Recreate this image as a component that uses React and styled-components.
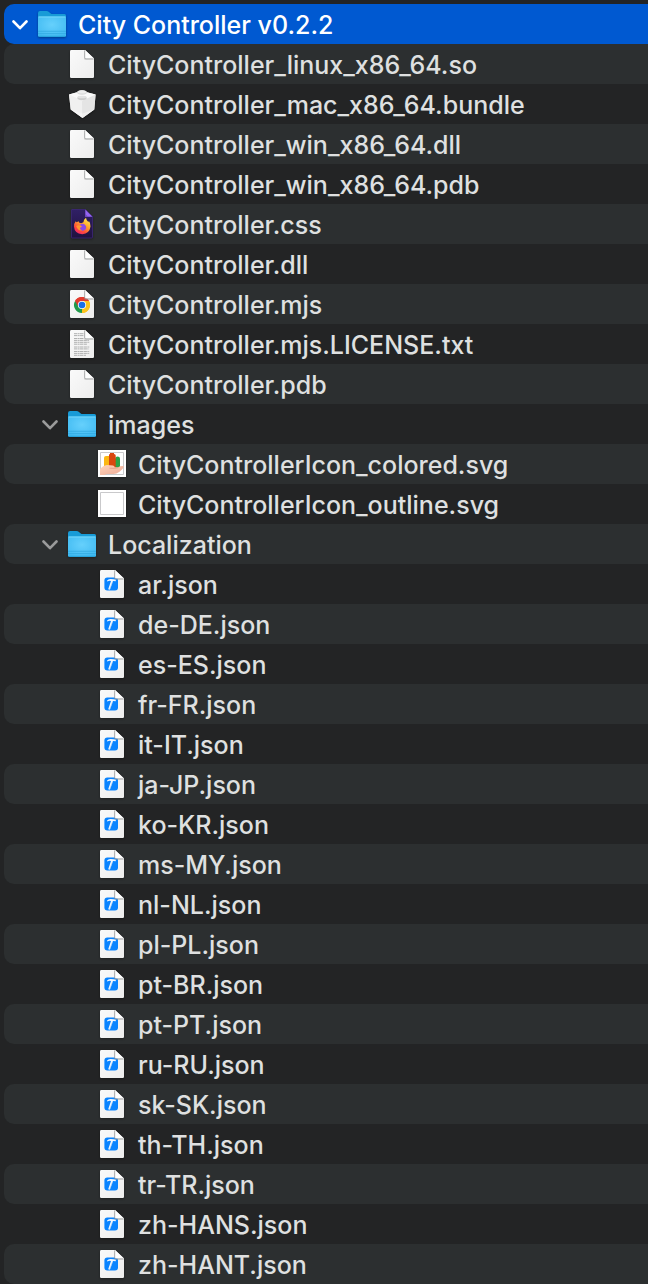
import React, { useState } from 'react';
import styled, { createGlobalStyle } from 'styled-components';

const GlobalStyle = createGlobalStyle`
  * { box-sizing: border-box; }
  html { background: #232425; }
  body { margin: 0; background: #232425; overflow-x: hidden; }
`;

const Tree = styled.ul`
  margin: 0;
  padding: 4px 0 0 4px;
  list-style: none;
  font-family: Inter, "Liberation Sans", sans-serif;
  font-size: 25px;
  font-weight: 500;
  line-height: 40px;
`;

const Row = styled.li`
  display: flex;
  align-items: center;
  height: 40px;
  padding-left: ${(p) => 8 + p.$level * 30}px;
  border-radius: 10px 0 0 10px;
  color: ${(p) => (p.$selected ? '#ffffff' : '#dfe0e0')};
  background: ${(p) => (p.$selected ? '#0059d1' : p.$striped ? '#2c2f30' : 'transparent')};
`;

const Disclosure = styled.button`
  display: flex;
  align-items: center;
  justify-content: center;
  width: 16px;
  height: 28px;
  padding: 2px 0 0;
  border: 0;
  background: none;
  color: ${(p) => (p.$selected ? '#ffffff' : '#9a9b9b')};

  svg { transform: ${(p) => (p.$open ? 'none' : 'rotate(-90deg)')}; }
`;

const Spacer = styled.span`
  width: 16px;
`;

const IconBox = styled.span`
  display: flex;
  flex: none;
  margin: 0 12px 0 10px;

  svg {
    display: block;
    overflow: visible;
    filter: drop-shadow(0 1px 1px rgba(0, 0, 0, 0.35));
  }
`;

const Name = styled.span`
  padding-top: 2px;
  white-space: nowrap;
`;

const Svg = ({ children }) => (
  <svg width="28" height="28" viewBox="0 0 28 28" aria-hidden="true">{children}</svg>
);

const Chevron = () => (
  <svg width="16" height="10" viewBox="0 0 16 10" fill="none" stroke="currentColor" strokeWidth="2.6" strokeLinecap="round" strokeLinejoin="round" aria-hidden="true">
    <path d="M1.5 1.5 8 8.2l6.5-6.7" />
  </svg>
);

const Defs = () => (
  <svg width="0" height="0" style={{ position: 'absolute' }} aria-hidden="true">
    <defs>
      <linearGradient id="paper" x1="0" y1="0" x2="1" y2="1">
        <stop offset="0" stopColor="#fafafa" /><stop offset="1" stopColor="#ededed" />
      </linearGradient>
      <radialGradient id="folderFront" cx=".5" cy=".4" r=".65">
        <stop offset="0" stopColor="#66d0fc" /><stop offset="1" stopColor="#42bbf2" />
      </radialGradient>
      <linearGradient id="night" x1="0" y1="0" x2="0" y2="1">
        <stop offset="0" stopColor="#302066" /><stop offset="1" stopColor="#20123f" />
      </linearGradient>
      <linearGradient id="flame" x1=".85" y1="0" x2=".2" y2="1">
        <stop offset="0" stopColor="#fff04f" /><stop offset=".4" stopColor="#ffa62b" />
        <stop offset=".72" stopColor="#ff4b3a" /><stop offset="1" stopColor="#ef2173" />
      </linearGradient>
      <linearGradient id="hand" x1="0" y1="0" x2="1" y2="1">
        <stop offset="0" stopColor="#ffd4bb" /><stop offset="1" stopColor="#eda994" />
      </linearGradient>
    </defs>
  </svg>
);

const Paper = ({ children }) => (
  <Svg>
    <path d="M3.2 0H17L26 8.6V26.8Q26 28 24.8 28H3.2Q2 28 2 26.8V1.2Q2 0 3.2 0Z" fill="url(#paper)" />
    {children}
    <path d="M16 .5V9Q16 9.8 17 9.8H25.8V8.4L17 0Z" fill="#8d8e8e" opacity=".3" />
    <path d="M17 0 26 8.6H18Q17 8.6 17 7.6Z" fill="#fff" />
    <path d="M16.7 .6V7.8Q16.8 8.9 18 8.9H25.4" fill="none" stroke="#9b9c9c" strokeWidth=".7" />
  </Svg>
);

const FolderIcon = () => (
  <Svg>
    <path d="M0 3Q0 1 2 1H8.5Q10 1 11 2T13.5 4H26.5Q28 4 28 5.5V12H0Z" fill="#189bd7" />
    <path d="M0 7.5Q0 6.5 1 6.5H27Q28 6.5 28 7.5V25.2Q28 27 26.2 27H1.8Q0 27 0 25.2Z" fill="url(#folderFront)" />
    <path d="M0.5 7H27.5" stroke="#77d7fa" strokeWidth="1" />
    <path d="M0 21.3H28M0 23.6H28" stroke="#2fa8df" strokeWidth=".7" />
    <path d="M0.5 26.3H27.5" stroke="#229fd8" strokeWidth="1" />
  </Svg>
);

const BundleIcon = () => (
  <Svg>
    <path d="M1 4.5 9 2.2 10 1Q14-.8 18 1L19 2.2 27.6 4.5 26.3 19.5 14.5 28 2.7 19.5Z" fill="#e5e5e5" />
    <path d="M1 4.5 14.2 10.5 14.5 28 2.7 19.5Z" fill="#f0f0f0" />
    <path d="M27.6 4.5 14.2 10.5 14.5 28 26.3 19.5Z" fill="#e4e4e4" />
    <path d="M1 4.5 9 2.3H19L27.6 4.5 14.2 10.7Z" fill="#fafafa" />
    <ellipse cx="14" cy="2.6" rx="4.8" ry="2.1" fill="#d7d7d7" />
    <ellipse cx="14" cy="1.9" rx="4.3" ry="1.5" fill="#ededed" />
    <path d="M9.5 7Q14 5.1 18.5 7V9Q14 11.6 9.5 9Z" fill="#cdcdcd" />
    <ellipse cx="14" cy="7" rx="4.4" ry="1.3" fill="#e3e3e3" />
    <path d="M2.7 19.5 14.5 28 26.3 19.5 14.5 23.5Z" fill="#fff" opacity=".4" />
  </Svg>
);

const FirefoxIcon = () => (
  <Svg>
    <path d="M4-.5H17.3L24.5 6.8V27Q24.5 28 23.5 28H4Q3.5 28 3.5 27.5V0Q3.5-.5 4-.5Z" fill="url(#night)" stroke="#3d277a" strokeWidth=".8" />
    <path d="M17.3-.5 24.5 6.8H17.3Z" fill="#9565f4" />
    <path d="M17.3 4 20 6.8H17.3Z" fill="#6a42bd" />
    <path d="M7.7 11.2 8.6 12.3 10.7 11.2 11 12.6 13.1 13.3 15.4 12.2Q15.5 9.2 18 7.7 18.2 10.2 20.3 12 21 11.5 20.8 10.7 22.7 13 22.5 16.5 21.5 23.8 14.2 24.2 6.5 23.8 6 16.5 5.8 13.5 7.7 11.2Z" fill="url(#flame)" />
    <path d="M11.2 15.3Q13 13 16 14 19.3 16.4 17.7 19.2 15.7 21.5 12.9 20.2 11.5 19.2 11.7 17.4L13.8 16.5Q12.5 15.2 11.2 15.3Z" fill="#8a4be5" />
    <path d="M8.2 16Q10.5 14.3 13.8 16.2 13.7 17.2 11.8 17.7 11.9 19.8 14.2 20.4 10.2 21.5 8.2 16Z" fill="#ff982e" />
  </Svg>
);

const ChromeIcon = () => (
  <Paper>
    <path d="M14 15 7.07 11A8 8 0 0 1 20.93 11Z" fill="#e33b2e" />
    <path d="M14 15 20.93 11A8 8 0 0 1 14 23Z" fill="#fcc31e" />
    <path d="M14 15 14 23A8 8 0 0 1 7.07 11Z" fill="#229a4b" />
    <path d="M7.07 11 10.54 17 14 15 14 11H20.93A8 8 0 0 0 7.07 11Z" fill="#e33b2e" />
    <path d="M20.93 11H14L17.46 17 14 23A8 8 0 0 0 20.93 11Z" fill="#fcc31e" />
    <circle cx="14" cy="15" r="4.1" fill="#fff" />
    <circle cx="14" cy="15" r="3.3" fill="#1b6fe8" />
  </Paper>
);

const TextIcon = () => (
  <Paper>
    <g stroke="#a7a8a8" strokeWidth=".9" strokeDasharray="3 .5 1.5 .4 4 .5">
      <path d="M6 3.7H16M6 5.6H15.5M6 8.5H16M6 10.4H21M6 12.3H21.5M6 14.2H19M6 17H21.5M6 18.9H20.5M6 21.5H21.5M6 23.4H21.5M6 25.3H18" />
    </g>
  </Paper>
);

const JsonIcon = () => (
  <Paper>
    <rect x="6.4" y="7.4" width="13.6" height="13.2" rx="3" fill="#0a84ff" />
    <path d="M8.9 10.8Q10.4 8.7 13 9L17.8 9.4V11.3L15 11 11.8 19.8 10.2 19.3 13 10.9Q11 10.4 9.4 11.5Z" fill="#f2f8ff" />
    <path d="M14.4 12.2 11.7 19.5" stroke="#a5c8ed" strokeWidth=".6" />
  </Paper>
);

const ImageFrame = ({ children }) => (
  <Svg>
    <path d="M0 0H28V27H0Z" fill="#fff" />
    <path d="M2.5 2.5H25.5V24.5H2.5Z" fill="#fff" stroke="#c9c9cb" strokeWidth="1" />
    {children}
  </Svg>
);

const ColoredIcon = () => (
  <ImageFrame>
    <path d="M6 8Q6 6 8 6H11V19H6Z" fill="#fbb713" />
    <path d="M17 8.5Q17.5 6.5 19.5 6.5 22 6.5 22 8.5V19H17Z" fill="#2ba148" />
    <path d="M11 5Q11 4 12 4V3H16V4Q17.7 4 17.7 5.5V19H11Z" fill="#d9470f" />
    <path d="M2 19.3Q5 15.5 9 15.1L15 15.4Q17 15.7 16.5 17.3H20Q23 15.5 25.7 16.3 26 18 21.5 21.8 18 24.5 14 24H9L6.3 25H2Z" fill="url(#hand)" />
    <path d="M11.5 18.2 16.5 18.4 20.5 17.6" fill="none" stroke="#dd927f" strokeWidth=".7" />
  </ImageFrame>
);

const icons = {
  folder: FolderIcon,
  file: Paper,
  bundle: BundleIcon,
  firefox: FirefoxIcon,
  chrome: ChromeIcon,
  text: TextIcon,
  json: JsonIcon,
  colored: ColoredIcon,
  outline: ImageFrame,
};

const locales = [
  'ar', 'de-DE', 'es-ES', 'fr-FR', 'it-IT', 'ja-JP', 'ko-KR', 'ms-MY', 'nl-NL',
  'pl-PL', 'pt-BR', 'pt-PT', 'ru-RU', 'sk-SK', 'th-TH', 'tr-TR', 'zh-HANS', 'zh-HANT',
];

const root = {
  name: 'City Controller v0.2.2',
  icon: 'folder',
  children: [
    { name: 'CityController_linux_x86_64.so', icon: 'file' },
    { name: 'CityController_mac_x86_64.bundle', icon: 'bundle' },
    { name: 'CityController_win_x86_64.dll', icon: 'file' },
    { name: 'CityController_win_x86_64.pdb', icon: 'file' },
    { name: 'CityController.css', icon: 'firefox' },
    { name: 'CityController.dll', icon: 'file' },
    { name: 'CityController.mjs', icon: 'chrome' },
    { name: 'CityController.mjs.LICENSE.txt', icon: 'text' },
    { name: 'CityController.pdb', icon: 'file' },
    {
      name: 'images',
      icon: 'folder',
      children: [
        { name: 'CityControllerIcon_colored.svg', icon: 'colored' },
        { name: 'CityControllerIcon_outline.svg', icon: 'outline' },
      ],
    },
    {
      name: 'Localization',
      icon: 'folder',
      children: locales.map((code) => ({ name: `${code}.json`, icon: 'json' })),
    },
  ],
};

const flatten = (node, closed, level = 0) => [
  { ...node, level },
  ...(node.children && !closed.includes(node.name)
    ? node.children.flatMap((child) => flatten(child, closed, level + 1))
    : []),
];

export default function App() {
  const [closed, setClosed] = useState([]);
  const [selected, setSelected] = useState(root.name);

  const toggle = (name) =>
    setClosed((list) => (list.includes(name) ? list.filter((n) => n !== name) : [...list, name]));

  return (
    <>
      <GlobalStyle />
      <Defs />
      <Tree role="tree" aria-label="Files">
        {flatten(root, closed).map((item, index) => {
          const Icon = icons[item.icon];
          const active = item.name === selected;
          const open = !closed.includes(item.name);
          return (
            <Row
              key={item.name}
              role="treeitem"
              aria-level={item.level + 1}
              aria-selected={active}
              aria-expanded={item.children ? open : undefined}
              $level={item.level}
              $selected={active}
              $striped={index % 2 === 1}
              onClick={() => setSelected(item.name)}
            >
              {item.children ? (
                <Disclosure
                  type="button"
                  aria-label={`Toggle ${item.name}`}
                  $selected={active}
                  $open={open}
                  onClick={() => toggle(item.name)}
                >
                  <Chevron />
                </Disclosure>
              ) : (
                <Spacer />
              )}
              <IconBox><Icon /></IconBox>
              <Name>{item.name}</Name>
            </Row>
          );
        })}
      </Tree>
    </>
  );
}
